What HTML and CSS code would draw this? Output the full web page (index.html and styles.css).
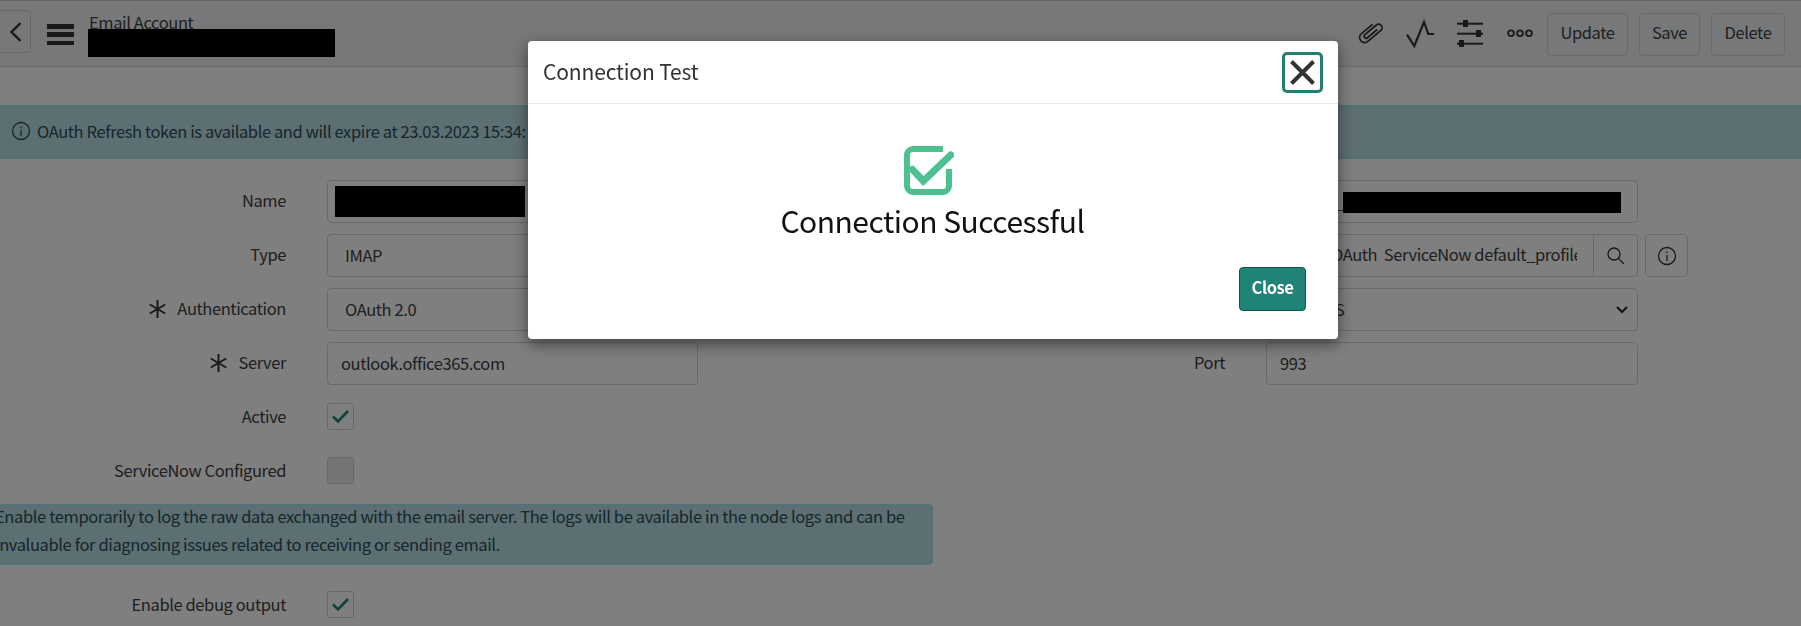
FILE: index.html
```html
<!DOCTYPE html>
<html lang="en">
<head>
  <meta charset="UTF-8">
  <meta name="viewport" content="width=device-width, initial-scale=1.0">
  <title>Email Account</title>
  <link rel="stylesheet" href="styles.css">
</head>
<body>
  <header class="topbar">
    <button class="back-btn">
      <svg width="14" height="22" viewBox="0 0 14 22"><path d="M11.500 2 L2.500 11 L11.500 20" fill="none" stroke="#333" stroke-width="2.400"/></svg>
    </button>
    <div class="hamburger"><span></span><span></span><span></span></div>
    <div class="title-block">
      <div class="title-text">Email Account</div>
      <div class="redacted title-redacted"></div>
    </div>
    <div class="tools">
      <svg class="tool" width="30" height="30" viewBox="0 0 30 30">
        <g transform="rotate(50 15 15)" fill="none" stroke="#333" stroke-width="1.800" stroke-linecap="round">
          <path d="M10 8 V22 a5 5 0 0 0 10 0 V5 a3.500 3.500 0 0 0 -7 0 V20 a2 2 0 0 0 4 0 V8"/>
        </g>
      </svg>
      <svg class="tool" width="30" height="30" viewBox="0 0 30 30">
        <path d="M2 16.700 L9.300 28 L19 4 L23.300 16 H29" fill="none" stroke="#333" stroke-width="2.200"/>
      </svg>
      <svg class="tool" width="30" height="30" viewBox="0 0 30 30" fill="#333">
        <rect x="2" y="4.700" width="26" height="2"/><rect x="2" y="14.700" width="26" height="2"/><rect x="2" y="24.700" width="26" height="2"/>
        <rect x="8" y="2" width="5" height="7"/><rect x="21" y="12" width="5" height="7"/><rect x="4" y="22" width="5" height="7"/>
      </svg>
      <svg class="tool" width="30" height="30" viewBox="0 0 30 30" fill="none" stroke="#333" stroke-width="1.800">
        <circle cx="6" cy="15.300" r="2.900"/><circle cx="15" cy="15.300" r="2.900"/><circle cx="24" cy="15.300" r="2.900"/>
      </svg>
    </div>
    <div class="actions">
      <button class="btn btn-update">Update</button>
      <button class="btn btn-save">Save</button>
      <button class="btn btn-delete">Delete</button>
    </div>
  </header>

  <div class="banner">
    <svg class="banner-icon" width="20" height="20" viewBox="0 0 20 20" fill="none" stroke="#2f4c56" stroke-width="1.300">
      <circle cx="10" cy="10" r="8.500"/><path d="M10 9 V15"/><path d="M10 5.500 V7.200"/>
    </svg>
    <span>OAuth Refresh token is available and will expire at 23.03.2023 15:34:</span>
  </div>

  <main class="form">
    <div class="form-grid">
      <label class="label">Name</label>
      <div class="field"><div class="redacted name-redacted"></div></div>
      <span></span>
      <div class="field-wrap">
        <div class="field field-end"><span>t_</span><div class="redacted user-redacted"></div></div>
      </div>

      <label class="label">Type</label>
      <div class="field field-select">IMAP</div>
      <span></span>
      <div class="field-wrap">
        <div class="lookup">
          <div class="lookup-text">OAuth  ServiceNow default_profile</div>
          <div class="lookup-btn">
            <svg width="20" height="20" viewBox="0 0 20 20" fill="none" stroke="#333" stroke-width="1.300"><circle cx="8" cy="8" r="6"/><path d="M12.500 12.500 L18 18"/></svg>
          </div>
        </div>
        <div class="info-btn">
          <svg width="20" height="20" viewBox="0 0 20 20" fill="none" stroke="#333" stroke-width="1.300"><circle cx="10" cy="10" r="8.500"/><path d="M10 9 V15"/><path d="M10 5.500 V7.200"/></svg>
        </div>
      </div>

      <label class="label">
        <svg class="req" width="17" height="18" viewBox="0 0 17 18" fill="none" stroke="#333" stroke-width="2"><path d="M8.500 0 V18 M0.800 4.500 L16.200 13.500 M0.800 13.500 L16.200 4.500"/></svg>
        Authentication
      </label>
      <div class="field field-select">OAuth 2.0</div>
      <span></span>
      <div class="field-wrap">
        <div class="field field-select field-chevron"><span>SSL/TLS</span><svg class="chevron" width="14" height="10" viewBox="0 0 14 10"><path d="M2 2 L7 7 L12 2" fill="none" stroke="#222" stroke-width="2"/></svg></div>
      </div>

      <label class="label">
        <svg class="req" width="17" height="18" viewBox="0 0 17 18" fill="none" stroke="#333" stroke-width="2"><path d="M8.500 0 V18 M0.800 4.500 L16.200 13.500 M0.800 13.500 L16.200 4.500"/></svg>
        Server
      </label>
      <div class="field">outlook.office365.com</div>
      <label class="label">Port</label>
      <div class="field-wrap"><div class="field">993</div></div>

      <label class="label">Active</label>
      <div class="check-cell">
        <div class="checkbox"><svg width="19" height="15" viewBox="0 0 19 15"><path d="M2 7.500 L7 12.500 L17 2" fill="none" stroke="#1f8476" stroke-width="2.600"/></svg></div>
      </div>
      <span></span><span></span>

      <label class="label">ServiceNow Configured</label>
      <div class="check-cell"><div class="checkbox checkbox-off"></div></div>
      <span></span><span></span>
    </div>

    <div class="note"><div class="note-text">Enable temporarily to log the raw data exchanged with the email server. The logs will be available in the node logs and can be<br>invaluable for diagnosing issues related to receiving or sending email.</div></div>

    <div class="form-grid debug-row">
      <label class="label">Enable debug output</label>
      <div class="check-cell">
        <div class="checkbox"><svg width="19" height="15" viewBox="0 0 19 15"><path d="M2 7.500 L7 12.500 L17 2" fill="none" stroke="#1f8476" stroke-width="2.600"/></svg></div>
      </div>
      <span></span><span></span>
    </div>
  </main>

  <div class="backdrop"></div>

  <div class="modal">
    <div class="modal-header">
      <h2 class="modal-title">Connection Test</h2>
      <button class="modal-x">
        <svg width="27" height="27" viewBox="0 0 27 27"><path d="M2.500 2.500 L24.500 24.500 M24.500 2.500 L2.500 24.500" stroke="#333" stroke-width="4" fill="none"/></svg>
      </button>
    </div>
    <div class="modal-body">
      <svg class="success-icon" width="50" height="50" viewBox="0 0 50 50" fill="none" stroke="#4cc08f" stroke-linecap="round">
        <path d="M39 3 H9 a6 6 0 0 0 -6 6 V40 a6 6 0 0 0 6 6 H39 a6 6 0 0 0 6 -6 V23" stroke-width="6" stroke-linecap="butt"/>
        <path d="M8.300 23.300 L19.300 35 L46.700 9" stroke-width="7"/>
      </svg>
      <div class="success-text">Connection Successful</div>
    </div>
    <div class="modal-footer">
      <button class="close-btn">Close</button>
    </div>
  </div>
</body>
</html>
```

FILE: styles.css
```css
* {
  box-sizing: border-box;
}

body {
  margin: 0;
  width: 1801px;
  height: 626px;
  overflow: hidden;
  background: #fff;
  color: #404040;
  font-family: "Noto Sans CJK JP", "Noto Sans", sans-serif;
  font-size: 16.500px;
  letter-spacing: -0.4px;
}

button {
  font-family: inherit;
  font-size: inherit;
  letter-spacing: inherit;
  color: inherit;
}

.topbar {
  display: flex;
  align-items: flex-start;
  height: 67px;
  background: #eef0f2;
  border-top: 1px solid #c4c6c8;
  border-bottom: 1px solid #d4d6d8;
}

.back-btn {
  display: flex;
  align-items: center;
  justify-content: center;
  width: 41px;
  height: 43px;
  margin: 9px 0 0 -10px;
  padding: 0 0 0 10px;
  background: #eef0f2;
  border: 1px solid #d0d2d4;
  border-radius: 4px;
}

.hamburger {
  display: flex;
  flex-direction: column;
  justify-content: space-between;
  width: 27px;
  height: 21px;
  margin: 23px 0 0 16px;
}

.hamburger span {
  display: block;
  height: 4.500px;
  background: #333;
}

.title-block {
  width: 247px;
  margin-left: 14px;
  padding-top: 14px;
}

.title-text {
  line-height: 14px;
  padding-left: 1px;
}

.redacted {
  background: #000;
  flex: none;
}

.title-redacted {
  height: 28px;
}

.tools {
  display: flex;
  gap: 20px;
  margin: 17px 12px 0 auto;
}

.tool {
  display: block;
}

.actions {
  display: flex;
  gap: 11px;
  margin: 12px 16px 0 0;
}

.btn {
  height: 43px;
  padding: 0 0 5px;
  background: #eef0f2;
  border: 1px solid #d0d2d4;
  border-radius: 4px;
  line-height: 1;
}

.btn-update {
  width: 81px;
}

.btn-save {
  width: 61px;
}

.btn-delete {
  width: 74px;
}

.banner {
  display: flex;
  align-items: center;
  gap: 6px;
  height: 54px;
  margin-top: 38px;
  padding: 0 0 2px 11px;
  background: #b8dee6;
  border-top: 1px solid #98e8f4;
  border-bottom: 1px solid #98e8f4;
  color: #2f4c56;
}

.form {
  padding-top: 21px;
}

.form-grid {
  display: grid;
  grid-template-columns: 287px 371px 488px 423px;
  grid-auto-rows: 54px;
  column-gap: 40px;
}

.label {
  display: flex;
  justify-content: flex-end;
  padding: 8px 1px 0 0;
  line-height: 24px;
}

.req {
  flex: none;
  margin: 4px 11px 0 0;
}

.field {
  display: flex;
  align-items: center;
  height: 43px;
  padding: 0 13px 2px;
  background: #fff;
  border: 1px solid #d4d4d4;
  border-radius: 4px;
  white-space: pre;
  overflow: hidden;
}

.name-redacted {
  width: 190px;
  height: 31px;
  margin: 2px 0 0 -6px;
}

.field-end {
  justify-content: flex-end;
  padding: 1px 16px 0 0;
}

.user-redacted {
  width: 278px;
  height: 21px;
}

.field-select {
  padding-left: 17px;
}

.field-chevron {
  position: relative;
}

.chevron {
  position: absolute;
  right: 8px;
  top: 16px;
}

.field-wrap {
  display: flex;
  gap: 7px;
  height: 43px;
}

.field-wrap > .field {
  width: 372px;
}

.lookup {
  display: flex;
  width: 372px;
  height: 43px;
  background: #fff;
  border: 1px solid #d4d4d4;
  border-radius: 4px;
}

.lookup-text {
  flex: 1;
  margin-right: 16px;
  padding-left: 64px;
  line-height: 39px;
  white-space: pre;
  overflow: hidden;
}

.lookup-btn {
  display: flex;
  align-items: center;
  justify-content: center;
  width: 44px;
  border-left: 1px solid #d4d4d4;
}

.info-btn {
  display: flex;
  align-items: center;
  justify-content: center;
  width: 43px;
  border: 1px solid #d4d4d4;
  border-radius: 4px;
}

.check-cell {
  padding-top: 7px;
}

.checkbox {
  display: flex;
  align-items: center;
  justify-content: center;
  width: 27px;
  height: 27px;
  background: #fff;
  border: 1px solid #d0d0d0;
  border-radius: 3px;
}

.checkbox-off {
  background: #e8eaec;
}

.note {
  width: 951px;
  height: 61px;
  margin: 0 0 0 -18px;
  padding: 0 12px;
  background: #b8dee6;
  border: 1px solid #98e8f4;
  border-radius: 4px;
  color: #2f4c56;
  white-space: nowrap;
}

.note-text {
  margin-top: -2px;
  line-height: 27.500px;
  letter-spacing: -0.380px;
}

.debug-row {
  margin-top: 19px;
}

.backdrop {
  position: fixed;
  inset: 0;
  background: rgba(0, 0, 0, 0.5);
}

.modal {
  position: absolute;
  left: 528px;
  top: 41px;
  width: 810px;
  height: 298px;
  display: flex;
  flex-direction: column;
  background: #fff;
  border-radius: 4px;
  box-shadow: 0 5px 15px rgba(0, 0, 0, 0.5);
}

.modal-header {
  display: flex;
  align-items: center;
  justify-content: space-between;
  height: 63px;
  padding: 0 15px;
  border-bottom: 1px solid #e5e5e5;
}

.modal-title {
  margin: 0 0 2px;
  font-size: 21px;
  font-weight: 400;
  letter-spacing: -0.150px;
  color: #333;
}

.modal-x {
  display: flex;
  align-items: center;
  justify-content: center;
  width: 41px;
  height: 41px;
  padding: 0;
  background: #fff;
  border: 3px solid #237f72;
  border-radius: 5px;
}

.modal-body {
  display: flex;
  flex-direction: column;
  align-items: center;
  padding-top: 42px;
}

.success-icon {
  display: block;
  margin-left: -8px;
}

.success-text {
  margin: 4px 0 0 -1px;
  font-size: 30px;
  line-height: 40px;
  letter-spacing: -0.500px;
  color: #111;
}

.modal-footer {
  display: flex;
  justify-content: flex-end;
  margin-top: auto;
  padding: 0 32px 28px 0;
}

.close-btn {
  width: 67px;
  height: 44px;
  padding: 0 0 4px;
  background: #1f8476;
  border: 1px solid #14564c;
  border-radius: 4px;
  color: #fff;
  font-weight: 600;
}
```
